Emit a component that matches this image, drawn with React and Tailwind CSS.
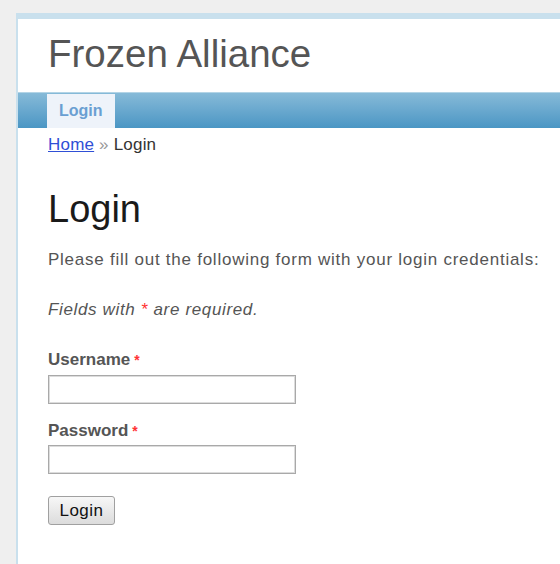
export default function App() {
  return (
    <div className="h-[564px] w-[560px] overflow-hidden bg-[#efefef] pl-4 pt-[13px] font-['Liberation_Sans',Arial,sans-serif]">
      <div className="h-full w-[600px] border-l-2 border-t-[6px] border-[#c9e0ed] bg-white">
        {/* site header */}
        <div className="pl-[30px] pt-[15px] text-[38.5px] leading-[40px] text-[#555]">Frozen Alliance</div>

        {/* main menu */}
        <div className="mt-[18px] h-[36px] border-t border-[#b3d4e6] bg-gradient-to-b from-[#86bad8] to-[#4a96c4] pt-px">
          <a
            href="#"
            className="ml-[29px] block h-[34px] w-[68px] bg-[#eef3fa] pl-[12px] text-[16px] font-bold leading-[34px] text-[#6a9fd2] no-underline"
          >
            Login
          </a>
        </div>

        {/* breadcrumbs */}
        <div className="mt-[7px] pl-[30px] text-[17px] leading-[20px] tracking-[0.2px] text-[#333]">
          <a href="#" className="text-[#2f4fd6] underline">Home</a>
          <span className="text-[#999]"> » </span>
          <span>Login</span>
        </div>

        {/* page content */}
        <div className="pl-[30px]">
          <h1 className="mt-[34px] text-[38px] leading-[40px] text-[#1a1a1a]">Login</h1>
          <p className="mt-[21px] text-[17px] leading-[20px] tracking-[0.75px] text-[#555]">
            Please fill out the following form with your login credentials:
          </p>
          <p className="mt-[30px] text-[17px] italic leading-[20px] tracking-[0.65px] text-[#555]">
            Fields with <span className="text-[#f33]">*</span> are required.
          </p>

          <form className="flex flex-col items-start" onSubmit={(e) => e.preventDefault()}>
            <label className="mt-[30px] text-[17px] font-bold leading-[20px] text-[#555]">
              Username<span className="ml-[4px] align-top text-[14px] text-[#f33]">*</span>
            </label>
            <input
              type="text"
              className="mt-[5px] h-[29px] w-[248px] border border-[#a9a9a9] bg-white shadow-[inset_0_0_0_1px_#dcdcdc] outline-none"
            />
            <label className="mt-[17px] text-[17px] font-bold leading-[20px] text-[#555]">
              Password<span className="ml-[4px] align-top text-[14px] text-[#f33]">*</span>
            </label>
            <input
              type="password"
              className="mt-[4px] h-[29px] w-[248px] border border-[#a9a9a9] bg-white shadow-[inset_0_0_0_1px_#dcdcdc] outline-none"
            />
            <button
              type="submit"
              className="mt-[22px] h-[29px] w-[67px] rounded-[3px] border border-[#a0a0a0] bg-gradient-to-b from-[#f7f7f7] to-[#dcdcdc] text-[17px] tracking-[0.5px] text-[#111]"
            >
              Login
            </button>
          </form>
        </div>
      </div>
    </div>
  );
}
